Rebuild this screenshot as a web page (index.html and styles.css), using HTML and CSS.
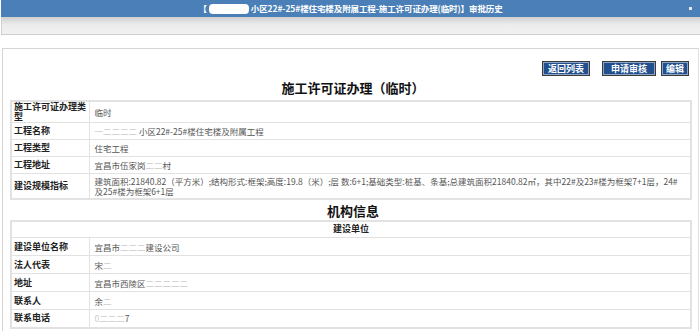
FILE: index.html
```html
<!DOCTYPE html>
<html lang="zh-CN">
<head>
    <meta charset="UTF-8">
    <meta name="viewport" content="width=device-width, initial-scale=1.0">
    <title>审批历史</title>
    <link rel="stylesheet" href="styles.css">
</head>
<body>
    <div class="titleBar">
        <span class="title">【<span class="mask"></span>小区22#-25#楼住宅楼及附属工程-施工许可证办理(临时)】审批历史</span>
        <span class="closeIcon"></span>
    </div>
    <div class="toolBar"></div>

    <div class="panel">
        <div class="actions">
            <button class="btn first">返回列表</button>
            <button class="btn wide">申请审核</button>
            <button class="btn">编辑</button>
        </div>

        <h2 class="heading">施工许可证办理（临时）</h2>
        <table class="info">
            <tr class="r20">
                <th>施工许可证办理类型</th>
                <td>临时</td>
            </tr>
            <tr>
                <th>工程名称</th>
                <td><span class="blur">一二二二二</span> 小区22#-25#楼住宅楼及附属工程</td>
            </tr>
            <tr>
                <th>工程类型</th>
                <td>住宅工程</td>
            </tr>
            <tr>
                <th>工程地址</th>
                <td>宜昌市伍家岗<span class="blur">二二</span>村</td>
            </tr>
            <tr class="r26">
                <th>建设规模指标</th>
                <td>建筑面积:21840.82（平方米）;结构形式:框架;高度:19.8（米）;层 数:6+1;基础类型:桩基、条基;总建筑面积21840.82㎡，其中22#及23#楼为框架7+1层，24#及25#楼为框架6+1层</td>
            </tr>
        </table>

        <h2 class="heading small">机构信息</h2>
        <table class="info org">
            <tr class="head">
                <th colspan="2" class="group">建设单位</th>
            </tr>
            <tr>
                <th>建设单位名称</th>
                <td>宜昌市<span class="blur">二二二</span>建设公司</td>
            </tr>
            <tr>
                <th>法人代表</th>
                <td>宋<span class="blur">二</span></td>
            </tr>
            <tr>
                <th>地址</th>
                <td>宜昌市西陵区<span class="blur">二二二二二</span></td>
            </tr>
            <tr>
                <th>联系人</th>
                <td>余<span class="blur">二</span></td>
            </tr>
            <tr>
                <th>联系电话</th>
                <td><span class="blur">0二二二</span>7</td>
            </tr>
        </table>
    </div>
</body>
</html>
```

FILE: styles.css
```css
*{
    padding: 0;
    margin: 0;
    box-sizing: border-box;
}
body{
    background: #fff;
    font-family: "Noto Sans CJK SC", "DejaVu Sans", sans-serif;
    color: #333;
    width: 700px;
    overflow: hidden;
}
.titleBar{
    position: relative;
    height: 17px;
    margin-left: 1px;
    background: #4a80b7;
    display: flex;
    justify-content: center;
    align-items: center;
}
.title{
    color: #fff;
    font-size: 8.5px;
    font-weight: bold;
    line-height: 17px;
    display: flex;
    align-items: center;
    margin-left: 0;
    letter-spacing: -0.1px;
}
.mask{
    display: inline-block;
    width: 40px;
    height: 10px;
    background: #fff;
    border-radius: 4px;
    margin: 0 2px 0 2px;
}
.closeIcon{
    position: absolute;
    right: 8px;
    top: 7px;
    width: 3px;
    height: 3px;
    background: #dfe8f3;
}
.toolBar{
    height: 18px;
    margin-left: 1px;
    background: linear-gradient(#cfcfcf, #ececec 45%, #f1f1f1);
    border-left: 1px solid #d2d2d2;
    border-bottom: 1px solid #cdcdcd;
}
.panel{
    margin: 13px 1px 0 2px;
    border-top: 1px solid #d4d4d4;
    border-left: 1px solid #d4d4d4;
    border-right: 1px solid #e2e2e2;
    padding: 12px 6px 0 7px;
    height: 300px;
}
.actions{
    display: flex;
    justify-content: flex-end;
    gap: 5px;
    padding-right: 3px;
}
.btn{
    background: #22508e;
    color: #fff;
    font-family: "Noto Sans CJK SC", sans-serif;
    font-size: 9px;
    font-weight: bold;
    height: 15px;
    line-height: 11px;
    padding: 0 4px;
    border: 1px solid #3a3a3a;
    box-shadow: inset 0 0 0 1px #8ea4c4;
}
.btn.first{
    margin-right: 7px;
    padding: 0 5px;
}
.btn.wide{
    padding: 0 8px;
}
.heading{
    text-align: center;
    font-size: 13px;
    font-weight: bold;
    color: #111;
    height: 24px;
    line-height: 24px;
    margin-left: 4px;
}
.heading.small{
    height: 20px;
    line-height: 22px;
}
.info{
    width: 682px;
    border-collapse: collapse;
    border: 2px solid #e2e2e2;
    font-size: 9px;
}
.info tr{
    height: 17px;
}
.info tr.r20{
    height: 19px;
}
.info tr.r26{
    height: 25px;
}
.info.org tr{
    height: 18px;
}
.info.org tr.head{
    height: 17px;
}
.info th, .info td{
    border: 1px solid #e2e2e2;
    vertical-align: middle;
    line-height: 10px;
}
.info th{
    width: 78px;
    text-align: left;
    font-weight: bold;
    color: #222;
    padding: 0 2px;
}
.info th.group{
    width: auto;
    text-align: center;
}
.info td{
    color: #555;
    padding: 0 5px;
    font-size: 8.5px;
}
.blur{
    color: #ccc;
}
```
